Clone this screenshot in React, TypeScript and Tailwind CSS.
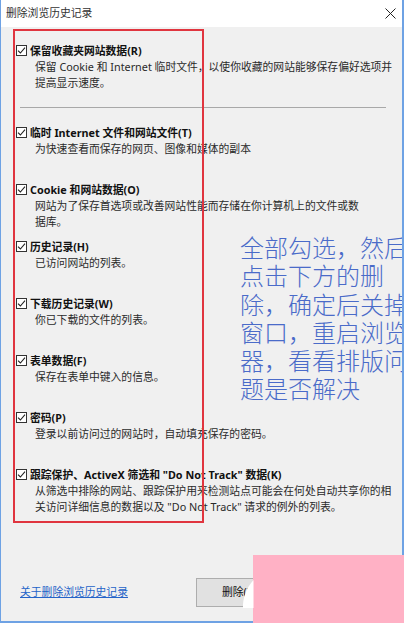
import React from "react";

const items = [
  {
    title: "临时 Internet 文件和网站文件(T)",
    desc: ["为快速查看而保存的网页、图像和媒体的副本"],
  },
  {
    title: "Cookie 和网站数据(O)",
    desc: ["网站为了保存首选项或改善网站性能而存储在你计算机上的文件或数", "据库。"],
  },
  { title: "历史记录(H)", desc: ["已访问网站的列表。"] },
  { title: "下载历史记录(W)", desc: ["你已下载的文件的列表。"] },
  { title: "表单数据(F)", desc: ["保存在表单中键入的信息。"] },
  { title: "密码(P)", desc: ["登录以前访问过的网站时，自动填充保存的密码。"] },
  {
    title: "跟踪保护、ActiveX 筛选和 \"Do Not Track\" 数据(K)",
    desc: [
      "从筛选中排除的网站、跟踪保护用来检测站点可能会在何处自动共享你的相",
      "关访问详细信息的数据以及 \"Do Not Track\" 请求的例外的列表。",
    ],
  },
];

function CheckBox() {
  return (
    <span className="w-[11px] h-[11px] border border-[#333] bg-white flex items-center justify-center shrink-0">
      <svg width="9" height="9" viewBox="0 0 9 9" fill="none">
        <path d="M1 4.6 L3.4 7 L8 1.6" stroke="#222" strokeWidth="1.1" />
      </svg>
    </span>
  );
}

function Item({ title, desc }: { title: string; desc: string[] }) {
  return (
    <div>
      <div className="flex items-center gap-[3px] h-[17px]">
        <CheckBox />
        <span className="font-bold text-[#111] leading-[17px]">{title}</span>
      </div>
      <div className="ml-[19px] text-[#2a2a2a] leading-[16px]">
        {desc.map((d, i) => (
          <div key={i}>{d}</div>
        ))}
      </div>
    </div>
  );
}

export default function App() {
  return (
    <div
      className="relative w-[404px] h-[623px] overflow-hidden whitespace-nowrap text-[10.8px]"
      style={{ fontFamily: '"Noto Sans", "Noto Sans CJK SC", sans-serif' }}
    >
      <div className="relative w-[404px] h-[623px] overflow-hidden bg-[#f0f0f0] border-l border-r-2 border-b-2 border-[#6ea2e4] flex flex-col">
        <div className="h-[27px] bg-white flex items-center justify-between pl-[5px] pr-[6px] shrink-0">
          <span className="text-[#333]">删除浏览历史记录</span>
          <svg width="11" height="11" viewBox="0 0 11 11" fill="none">
            <path d="M0.5 0.5 L10.5 10.5 M10.5 0.5 L0.5 10.5" stroke="#222" strokeWidth="1" />
          </svg>
        </div>

        <div className="flex-1 pl-[15px] pt-[15px]">
          <Item
            title="保留收藏夹网站数据(R)"
            desc={[
              "保留 Cookie 和 Internet 临时文件，以使你收藏的网站能够保存偏好选项并",
              "提高显示速度。",
            ]}
          />
          <div className="mt-[16px] ml-[4px] w-[366px] h-px bg-[#a8a8a8]" />

          <div className="mt-[16px]">
            {items.map((it) => (
              <div key={it.title} className="h-[57px]">
                <Item title={it.title} desc={it.desc} />
              </div>
            ))}
          </div>

          <div className="mt-[55px] flex items-center h-[29px]">
            <div className="w-[180px] pl-[4px]">
              <span className="text-[#2463c8] underline">关于删除浏览历史记录</span>
            </div>
            <button className="w-[88px] h-[29px] bg-[#e1e1e1] border border-[#adadad] text-[#111]">
              删除(D)
            </button>
          </div>
        </div>

        {/* red annotation frame */}
        <div className="absolute left-[12px] top-[29px] w-[191px] h-[494px] border-2 border-[#e0353f]" />

        {/* annotation text */}
        <div
          className="absolute left-[239px] top-[233px] text-[24px] leading-[28.3px] font-light text-[#4a6bc9]"
          style={{ fontFamily: '"Noto Sans CJK SC", sans-serif' }}
        >
          <div>全部勾选，然后</div>
          <div>点击下方的删</div>
          <div>除，确定后关掉</div>
          <div>窗口，重启浏览</div>
          <div>器，看看排版问</div>
          <div>题是否解决</div>
        </div>
      </div>

      {/* watermark */}
      <div className="absolute left-[253px] top-[555px] right-0 bottom-0 bg-[#ffb1c5]" />
      <svg className="absolute left-[240px] top-[578px]" width="14" height="31" viewBox="0 0 14 31">
        <path d="M13.5 2 L13.5 30 L3 30 C2.5 21 6 10 13.5 2 Z" fill="#ffffff" />
      </svg>
    </div>
  );
}
